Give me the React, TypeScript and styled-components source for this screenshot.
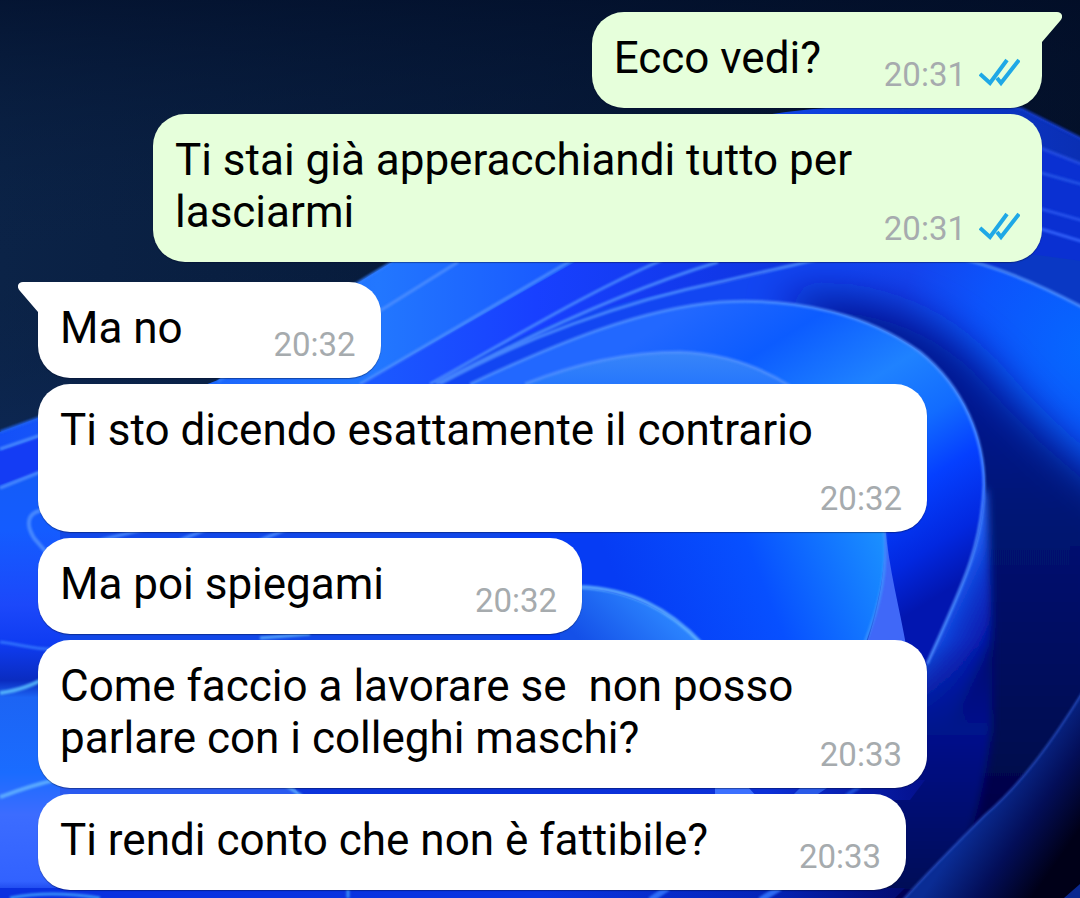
import React from "react";
import styled, { createGlobalStyle } from "styled-components";

const GlobalStyle = createGlobalStyle`
  * { box-sizing: border-box; }
  html, body { margin: 0; padding: 0; }
  body {
    background: #04142f;
    font-family: Roboto, "Liberation Sans", sans-serif;
  }
`;

const Screen = styled.main`
  position: relative;
  min-height: 100vh;
  overflow: hidden;
`;

const WallpaperArt = styled.svg`
  position: absolute;
  inset: 0;
  width: 100%;
  height: 100%;
`;

const Thread = styled.ol`
  position: relative;
  display: flex;
  flex-direction: column;
  gap: 6px;
  margin: 0;
  padding: 12px 38px 7px;
  list-style: none;
`;

const Bubble = styled.li<{ $out: boolean; $tail: boolean; $turn: boolean }>`
  position: relative;
  display: grid;
  align-self: ${(p) => (p.$out ? "flex-end" : "flex-start")};
  max-width: 889px;
  margin-top: ${(p) => (p.$turn ? "14px" : "0")};
  padding: 20px 22px 24px;
  border-radius: 32px;
  border-top-right-radius: ${(p) => (p.$tail && p.$out ? "0" : "32px")};
  border-top-left-radius: ${(p) => (p.$tail && !p.$out ? "0" : "32px")};
  background: ${(p) => (p.$out ? "#e6ffdb" : "#ffffff")};
  box-shadow: 0 1px 1px rgba(0, 10, 40, 0.4);
`;

const Tail = styled.svg<{ $out: boolean }>`
  position: absolute;
  top: 0;
  left: ${(p) => (p.$out ? "100%" : "auto")};
  right: ${(p) => (p.$out ? "auto" : "100%")};
  width: 21px;
  height: 31px;
  margin: 0 -1px;
  transform: ${(p) => (p.$out ? "none" : "scaleX(-1)")};
  fill: ${(p) => (p.$out ? "#e6ffdb" : "#ffffff")};
`;

const Text = styled.p`
  grid-area: 1 / 1;
  margin: 0;
  color: #000;
  font-size: 44px;
  line-height: 52px;
  white-space: pre-wrap;
`;

/* Keeps the end of the last line clear of the time stamp. */
const Reserve = styled.span<{ $out: boolean }>`
  display: inline-block;
  width: ${(p) => (p.$out ? "199px" : "176px")};
  height: 1px;
`;

const Meta = styled.div<{ $out: boolean }>`
  grid-area: 1 / 1;
  place-self: end;
  display: flex;
  align-items: flex-end;
  gap: 13px;
  margin-bottom: -11px;
  padding-right: ${(p) => (p.$out ? "0" : "3px")};
`;

const Time = styled.time`
  color: #a6abae;
  font-size: 33px;
  line-height: 40px;
`;

const Ticks = styled.svg`
  width: 41px;
  height: 30px;
  margin-bottom: 8px;
  fill: none;
  stroke: #1fa8e6;
  stroke-width: 4;
`;

type Message = { text: string; time: string; out?: boolean; tail?: boolean; turn?: boolean };

const messages: Message[] = [
  { text: "Ecco vedi?", time: "20:31", out: true, tail: true },
  { text: "Ti stai già apperacchiandi tutto per lasciarmi", time: "20:31", out: true },
  { text: "Ma no", time: "20:32", tail: true, turn: true },
  { text: "Ti sto dicendo esattamente il contrario", time: "20:32" },
  { text: "Ma poi spiegami", time: "20:32" },
  { text: "Come faccio a lavorare se  non posso parlare con i colleghi maschi?", time: "20:33" },
  { text: "Ti rendi conto che non è fattibile?", time: "20:33" },
];

function Wallpaper() {
  return (
    <WallpaperArt viewBox="0 0 1080 898" preserveAspectRatio="xMidYMid slice" aria-hidden="true">
      <defs>
        <linearGradient id="night" x1="0" y1="0" x2="1" y2="0">
          <stop offset="0" stopColor="#0b2347" />
          <stop offset="0.5" stopColor="#061938" />
          <stop offset="1" stopColor="#020c22" />
        </linearGradient>
        <linearGradient id="nightTop" x1="0" y1="0" x2="0" y2="1">
          <stop offset="0" stopColor="#020f2a" stopOpacity="0.7" />
          <stop offset="0.3" stopColor="#0b2347" stopOpacity="0" />
          <stop offset="0.5" stopColor="#0d2a5c" stopOpacity="0.6" />
        </linearGradient>
        <linearGradient id="bloom" x1="0" y1="0" x2="1" y2="0">
          <stop offset="0" stopColor="#1450f8" />
          <stop offset="0.35" stopColor="#2277ff" />
          <stop offset="0.5" stopColor="#1a5cff" />
          <stop offset="0.8" stopColor="#0c3cd8" />
          <stop offset="1" stopColor="#0a2fb4" />
        </linearGradient>
        <linearGradient id="fold" gradientUnits="userSpaceOnUse" x1="380" y1="0" x2="900" y2="0">
          <stop offset="0" stopColor="#1b58ff" />
          <stop offset="0.3" stopColor="#1840ff" />
          <stop offset="1" stopColor="#0a30d2" />
        </linearGradient>
        <radialGradient id="outer" gradientUnits="userSpaceOnUse" cx="1090" cy="350" r="260">
          <stop offset="0" stopColor="#0668ff" />
          <stop offset="0.45" stopColor="#0c54fc" />
          <stop offset="0.75" stopColor="#1444ee" />
          <stop offset="1" stopColor="#1246f2" />
        </radialGradient>
        <linearGradient id="crest" gradientUnits="userSpaceOnUse" x1="700" y1="300" x2="900" y2="620">
          <stop offset="0" stopColor="#2268ff" />
          <stop offset="0.2" stopColor="#0c5cff" />
          <stop offset="0.42" stopColor="#1f82ff" />
          <stop offset="0.58" stopColor="#126cff" />
          <stop offset="0.72" stopColor="#0540ff" />
          <stop offset="0.88" stopColor="#0228e0" />
          <stop offset="1" stopColor="#0216b0" />
        </linearGradient>
        <linearGradient id="heart" gradientUnits="userSpaceOnUse" x1="640" y1="640" x2="890" y2="540">
          <stop offset="0" stopColor="#063cf4" />
          <stop offset="0.5" stopColor="#0750ff" />
          <stop offset="1" stopColor="#1b92ff" />
        </linearGradient>
        <linearGradient id="innerTop" gradientUnits="userSpaceOnUse" x1="0" y1="350" x2="0" y2="520">
          <stop offset="0" stopColor="#3a86f8" />
          <stop offset="0.3" stopColor="#1c70ff" />
          <stop offset="1" stopColor="#0848ff" stopOpacity="0" />
        </linearGradient>
        <linearGradient id="disc" gradientUnits="userSpaceOnUse" x1="660" y1="600" x2="600" y2="660">
          <stop offset="0" stopColor="#2c86ff" />
          <stop offset="1" stopColor="#1450e8" />
        </linearGradient>
        <linearGradient id="stem" gradientUnits="userSpaceOnUse" x1="930" y1="620" x2="992" y2="650">
          <stop offset="0" stopColor="#2a6aff" />
          <stop offset="0.4" stopColor="#0a38d0" />
          <stop offset="0.85" stopColor="#0618a8" />
          <stop offset="1" stopColor="#020f70" />
        </linearGradient>
        <linearGradient id="stemFade" gradientUnits="userSpaceOnUse" x1="0" y1="640" x2="0" y2="898">
          <stop offset="0" stopColor="#04118c" stopOpacity="0" />
          <stop offset="0.35" stopColor="#04128c" />
          <stop offset="1" stopColor="#000654" />
        </linearGradient>
        <linearGradient id="nightRight" gradientUnits="userSpaceOnUse" x1="0" y1="400" x2="0" y2="820">
          <stop offset="0" stopColor="#001590" />
          <stop offset="0.3" stopColor="#001272" />
          <stop offset="0.6" stopColor="#001060" />
          <stop offset="1" stopColor="#000346" />
        </linearGradient>
        <linearGradient id="corner" gradientUnits="userSpaceOnUse" x1="975" y1="820" x2="1050" y2="872">
          <stop offset="0" stopColor="#0a2c94" />
          <stop offset="0.5" stopColor="#030e58" />
          <stop offset="1" stopColor="#000018" />
        </linearGradient>
        <linearGradient id="leftBody" gradientUnits="userSpaceOnUse" x1="0" y1="480" x2="0" y2="898">
          <stop offset="0" stopColor="#145cf8" />
          <stop offset="0.12" stopColor="#145cff" />
          <stop offset="0.3" stopColor="#1c48fa" />
          <stop offset="0.39" stopColor="#0f3cf2" />
          <stop offset="0.48" stopColor="#0a2cc0" />
          <stop offset="0.52" stopColor="#1c64f4" />
          <stop offset="0.7" stopColor="#1a6cff" />
          <stop offset="0.8" stopColor="#3c6cff" />
          <stop offset="0.96" stopColor="#3262ff" />
          <stop offset="1" stopColor="#0a30dc" />
        </linearGradient>
        <linearGradient id="baseStrip" x1="0" y1="0" x2="1" y2="0">
          <stop offset="0" stopColor="#0a30e0" />
          <stop offset="0.6" stopColor="#0a34e0" />
          <stop offset="0.85" stopColor="#0424b8" />
          <stop offset="1" stopColor="#020a70" />
        </linearGradient>
        <linearGradient id="midStrip" x1="0" y1="0" x2="1" y2="0">
          <stop offset="0" stopColor="#0c34dc" />
          <stop offset="0.75" stopColor="#0c30d8" />
          <stop offset="1" stopColor="#04108c" />
        </linearGradient>
        <filter id="soft" x="-5%" y="-5%" width="110%" height="110%">
          <feGaussianBlur stdDeviation="1" />
        </filter>
        <filter id="haze" filterUnits="userSpaceOnUse" x="700" y="200" width="500" height="800">
          <feGaussianBlur stdDeviation="22" />
        </filter>
        <filter id="edge" filterUnits="userSpaceOnUse" x="800" y="450" width="300" height="500">
          <feGaussianBlur stdDeviation="4" />
        </filter>
        <clipPath id="outerClip">
          <path d="M430 384 C500 340 590 302 720 284 C760 275 790 266 820 258 C880 246 950 254 985 266 C1020 277 1050 290 1080 306 V898 H430Z" />
        </clipPath>
      </defs>

      <rect width="1080" height="898" fill="url(#night)" />
      <rect width="1080" height="898" fill="url(#nightTop)" />

      <path
        d="M0 432 L38 418 C110 400 170 400 218 380 C270 340 320 305 392 262 C520 180 680 112 860 106 C950 100 1000 103 1022 109 L1080 138 V898 H0Z"
        fill="url(#bloom)"
      />
      <path d="M360 384 L575 262 C700 180 900 140 1042 148 L1080 163 V400Z" fill="url(#fold)" />
      <path d="M1000 250 L1090 262 V310 L1000 275Z" fill="#0a38c4" />

      <g clipPath="url(#outerClip)">
        <rect x="430" y="240" width="650" height="658" fill="url(#outer)" />
        <g filter="url(#haze)">
          <path
            d="M780 298 C860 290 930 310 985 365 C1015 400 1050 440 1130 500 V960 H880 V400Z"
            fill="url(#nightRight)"
          />
        </g>
      </g>

      <g filter="url(#edge)">
        <path d="M930 640 L975 490 H986 C991 560 993 640 992 720 C988 780 970 850 940 910 H860 V640Z" fill="url(#stem)" />
        <path d="M860 640 H992 V720 C988 780 970 850 940 910 H860Z" fill="url(#stemFade)" />
      </g>

      <path
        d="M470 384 C560 342 640 309 720 302 C800 297 870 316 920 352 C965 388 986 440 985 490 C982 550 960 590 927 664 L890 700 H400Z"
        fill="url(#crest)"
      />
      <path d="M525 384 C590 358 640 352 680 352 C730 354 765 370 790 386 L800 520 H480Z" fill="url(#innerTop)" />
      <path d="M500 520 H884 C888 560 880 600 866 642 H500Z" fill="url(#heart)" />
      <path d="M885 525 C889 570 900 610 906 645 H866 C880 605 886 570 884 525Z" fill="#4068f8" />
      <path d="M560 587 C620 587 668 608 702 644 H560Z" fill="url(#disc)" />

      <path d="M0 487 L60 466 V898 H0Z" fill="url(#leftBody)" />
      <path d="M0 451 L60 430 V464 L0 485Z" fill="#143cf4" />
      <path d="M60 525 H500 V645 H60Z" fill="#1248e8" />
      <path d="M60 780 H290 L302 800 H60Z" fill="#2a5af0" />
      <path d="M290 780 H925 L910 800 H302Z" fill="url(#midStrip)" />
      <path d="M715 787 H748 L758 798 H715Z" fill="#3c70ff" />
      <path d="M792 796 L802 786 H830 L815 796Z" fill="#2a5ae8" />
      <path d="M0 888 H905 L895 898 H0Z" fill="url(#baseStrip)" />

      <path d="M1080 695 C1050 745 1020 785 985 815 C955 845 930 870 905 898 H1080Z" fill="url(#corner)" />
      <path d="M1064 898 L1080 884 V898Z" fill="#0a2890" />

      <g fill="none" stroke="#5090ff" strokeWidth="3" filter="url(#soft)" opacity="0.85">
        <path d="M0 432 L50 414" stroke="#2464f0" />
        <path d="M0 449 L50 432" />
        <path d="M0 488 L50 468" />
        <path d="M44 510 C26 512 26 525 34 538 L46 552" strokeWidth="4" />
        <path d="M218 382 C270 340 320 305 392 262" stroke="#2f7cff" />
        <path d="M378 312 L458 262" />
        <path d="M360 384 L572 260" />
        <path d="M430 384 C510 340 580 296 662 260" />
        <path d="M436 384 C520 340 620 292 718 262" />
        <path d="M440 384 C520 340 620 302 724 281 C770 270 800 264 830 256" />
        <path d="M470 384 C560 342 640 309 720 302 C800 297 870 316 920 352 C965 388 984 440 984 485 C982 550 960 590 927 664" />
        <path d="M525 384 C590 358 640 352 680 352 C730 354 765 370 790 386" />
        <path d="M950 256 C1000 266 1050 290 1084 308" />
        <path d="M900 110 C960 100 1000 103 1022 109 L1084 140" stroke="#143cc8" />
        <path d="M1038 147 L1084 165" stroke="#2850e0" />
        <path d="M1038 172 L1084 185" stroke="#2858e8" />
        <path d="M1038 208 L1084 221" stroke="#2c58f0" />
        <path d="M1038 228 L1084 242" stroke="#3868ff" />
        <path d="M884 531 C888 570 880 605 864 645" stroke="#3c94ff" />
        <path d="M580 587 C630 589 668 608 702 644" stroke="#64b4ff" strokeWidth="4" />
        <path d="M0 642 C20 644 35 650 55 649" stroke="#3478ff" />
        <path d="M0 693 C20 690 30 686 50 676" stroke="#5cc0ff" strokeWidth="4" />
        <path d="M0 797 C20 790 40 782 66 778" stroke="#64b4ff" strokeWidth="4" />
        <path d="M260 638 L310 634" stroke="#60b4ff" />
        <path d="M285 785 L302 796" stroke="#60b4ff" />
        <path d="M10 898 Q50 890 100 898" stroke="#40a0ff" />
        <path d="M348 898 V888" stroke="#40a0ff" />
        <path d="M650 900 L668 888 M760 900 L780 888" stroke="#3478ff" strokeWidth="6" />
        <path d="M846 796 L860 786" stroke="#2458e0" strokeWidth="4" />
        <path d="M1084 690 C1050 745 1020 785 985 815 C955 845 930 870 903 900" stroke="#2c50c0" strokeWidth="2" />
        <path d="M100 540 L150 528 M180 540 L210 528 M260 540 L290 528" />
      </g>
    </WallpaperArt>
  );
}

function MessageBubble({ text, time, out = false, tail = false, turn = false }: Message) {
  return (
    <Bubble $out={out} $tail={tail} $turn={turn}>
      {tail && (
        <Tail $out={out} viewBox="0 0 21 31" aria-hidden="true">
          <path d="M0 0 H16 C21 0 23 5 19 9 L1 30 V31 H0Z" />
        </Tail>
      )}
      <Text>
        {text}
        <Reserve $out={out} />
      </Text>
      <Meta $out={out}>
        <Time>{time}</Time>
        {out && (
          <Ticks viewBox="0 0 41 30" role="img" aria-label="Letto">
            <path d="M1 17 L11 26 L28 3" />
            <path d="M18 21 L22 26 L40 3" />
          </Ticks>
        )}
      </Meta>
    </Bubble>
  );
}

export default function App() {
  return (
    <Screen>
      <GlobalStyle />
      <Wallpaper />
      <Thread>
        {messages.map((message) => (
          <MessageBubble key={message.text} {...message} />
        ))}
      </Thread>
    </Screen>
  );
}
